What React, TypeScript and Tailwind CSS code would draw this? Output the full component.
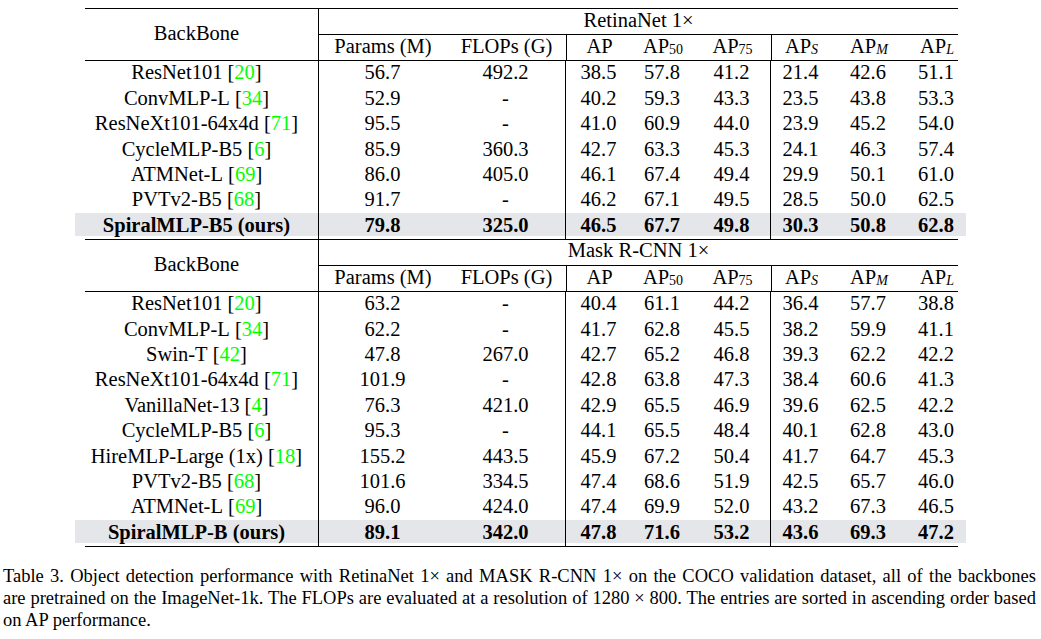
import React from "react";

type Row = {
  name: string;
  cite?: string;
  vals: string[];
  bold?: boolean;
};

const retinaRows: Row[] = [
  { name: "ResNet101", cite: "20", vals: ["56.7", "492.2", "38.5", "57.8", "41.2", "21.4", "42.6", "51.1"] },
  { name: "ConvMLP-L", cite: "34", vals: ["52.9", "-", "40.2", "59.3", "43.3", "23.5", "43.8", "53.3"] },
  { name: "ResNeXt101-64x4d", cite: "71", vals: ["95.5", "-", "41.0", "60.9", "44.0", "23.9", "45.2", "54.0"] },
  { name: "CycleMLP-B5", cite: "6", vals: ["85.9", "360.3", "42.7", "63.3", "45.3", "24.1", "46.3", "57.4"] },
  { name: "ATMNet-L", cite: "69", vals: ["86.0", "405.0", "46.1", "67.4", "49.4", "29.9", "50.1", "61.0"] },
  { name: "PVTv2-B5", cite: "68", vals: ["91.7", "-", "46.2", "67.1", "49.5", "28.5", "50.0", "62.5"] },
  { name: "SpiralMLP-B5 (ours)", bold: true, vals: ["79.8", "325.0", "46.5", "67.7", "49.8", "30.3", "50.8", "62.8"] },
];

const maskRows: Row[] = [
  { name: "ResNet101", cite: "20", vals: ["63.2", "-", "40.4", "61.1", "44.2", "36.4", "57.7", "38.8"] },
  { name: "ConvMLP-L", cite: "34", vals: ["62.2", "-", "41.7", "62.8", "45.5", "38.2", "59.9", "41.1"] },
  { name: "Swin-T", cite: "42", vals: ["47.8", "267.0", "42.7", "65.2", "46.8", "39.3", "62.2", "42.2"] },
  { name: "ResNeXt101-64x4d", cite: "71", vals: ["101.9", "-", "42.8", "63.8", "47.3", "38.4", "60.6", "41.3"] },
  { name: "VanillaNet-13", cite: "4", vals: ["76.3", "421.0", "42.9", "65.5", "46.9", "39.6", "62.5", "42.2"] },
  { name: "CycleMLP-B5", cite: "6", vals: ["95.3", "-", "44.1", "65.5", "48.4", "40.1", "62.8", "43.0"] },
  { name: "HireMLP-Large (1x)", cite: "18", vals: ["155.2", "443.5", "45.9", "67.2", "50.4", "41.7", "64.7", "45.3"] },
  { name: "PVTv2-B5", cite: "68", vals: ["101.6", "334.5", "47.4", "68.6", "51.9", "42.5", "65.7", "46.0"] },
  { name: "ATMNet-L", cite: "69", vals: ["96.0", "424.0", "47.4", "69.9", "52.0", "43.2", "67.3", "46.5"] },
  { name: "SpiralMLP-B (ours)", bold: true, vals: ["89.1", "342.0", "47.8", "71.6", "53.2", "43.6", "69.3", "47.2"] },
];

// cells that start a new group get a left rule
const ruled = [0, 2, 5];

const Rule = () => <div className="ml-[10px] h-px w-[873px] bg-black" />;

const Ap = ({ sub, italic }: { sub?: string; italic?: boolean }) => (
  <span>
    AP
    {sub && (
      <sub className={`text-[14px] ${italic ? "italic" : ""} relative top-[1px]`}>{sub}</sub>
    )}
  </span>
);

const Header = ({ title }: { title: string }) => {
  const heads: React.ReactNode[] = [
    "Params (M)",
    "FLOPs (G)",
    <Ap key="ap" />,
    <Ap key="50" sub="50" />,
    <Ap key="75" sub="75" />,
    <Ap key="s" sub="S" italic />,
    <Ap key="m" sub="M" italic />,
    <Ap key="l" sub="L" italic />,
  ];
  return (
    <div className="flex">
      <div className="flex w-[243px] items-center justify-center pb-[2px]">BackBone</div>
      <div className="w-[648px] border-l border-black">
        <div className="flex h-[25px] items-center justify-center pr-[8px] pb-[3px]">{title}</div>
        <div className="mr-[8px] h-px bg-black" />
        <div className="grid h-[25px] grid-cols-[128px_119px_66px_62px_77px_60px_76px_60px]">
          {heads.map((h, i) => (
            <div
              key={i}
              className={`flex items-center justify-center pb-[2px] ${i === 2 || i === 5 ? "border-l border-black" : ""}`}
            >
              {h}
            </div>
          ))}
        </div>
      </div>
    </div>
  );
};

const DataRow = ({ row }: { row: Row }) => (
  <div
    className={`grid h-[25.4px] grid-cols-[243px_128px_119px_66px_62px_77px_60px_76px_60px] ${
      row.bold ? "bg-[linear-gradient(to_bottom,#e5e6e9_23px,transparent_23px)] font-bold" : ""
    }`}
  >
    <div className="flex items-center justify-center whitespace-nowrap pb-[2px]">
      {row.name}
      {row.cite && (
        <>
          &nbsp;[<span className="text-[#00ff00]">{row.cite}</span>]
        </>
      )}
    </div>
    {row.vals.map((v, i) => (
      <div
        key={i}
        className={`flex items-center justify-center pb-[2px] ${ruled.includes(i) ? "border-l border-black" : ""}`}
      >
        {v}
      </div>
    ))}
  </div>
);

export default function App() {
  return (
    <div className="h-[639px] w-[1041px] overflow-hidden bg-white pt-[8px] font-['Liberation_Serif',serif] text-black">
      <div className="ml-[75px] w-[891px] text-[20.5px] leading-none">
        <Rule />
        <Header title="RetinaNet 1×" />
        <Rule />
        {retinaRows.map((r) => (
          <DataRow key={r.name} row={r} />
        ))}
        <Rule />
        <Header title="Mask R-CNN 1×" />
        <Rule />
        {maskRows.map((r) => (
          <DataRow key={r.name} row={r} />
        ))}
        <Rule />
      </div>
      <div className="mt-[18px] pl-[3px] pr-[5px] text-[18.5px] leading-[22px]">
        <p className="text-justify [text-align-last:justify] [word-spacing:-1.5px]">
          Table 3. Object detection performance with RetinaNet 1× and MASK R-CNN 1× on the COCO validation dataset, all of the backbones
        </p>
        <p className="text-justify [text-align-last:justify] [word-spacing:-1.5px]">
          are pretrained on the ImageNet-1k. The FLOPs are evaluated at a resolution of 1280 × 800. The entries are sorted in ascending order based
        </p>
        <p>on AP performance.</p>
      </div>
    </div>
  );
}
